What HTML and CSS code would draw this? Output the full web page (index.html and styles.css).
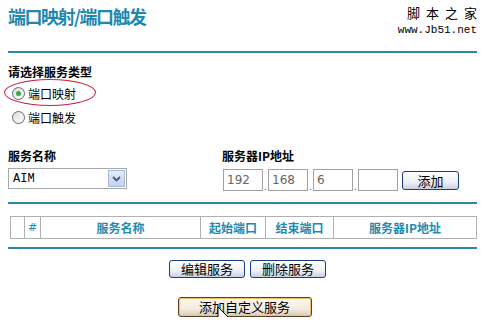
FILE: index.html
```html
<!DOCTYPE html>
<html lang="zh-CN">
<head>
    <meta charset="UTF-8">
    <title>端口映射/端口触发</title>
    <link rel="stylesheet" href="styles.css">
</head>
<body>
    <div class="page">
        <!-- Title and watermark -->
        <div class="header">
            <h1>端口映射/端口触发</h1>
            <div class="logo">
                <div class="logo-cn">脚本之家</div>
                <div class="logo-url">www.Jb51.net</div>
            </div>
        </div>
        <div class="rule"></div>

        <!-- Service type -->
        <div class="type-section">
            <div class="label">请选择服务类型</div>
            <label class="radio-row marked">
                <span class="radio checked"></span>端口映射
                <span class="ring"></span>
            </label>
            <label class="radio-row">
                <span class="radio"></span>端口触发
            </label>
        </div>

        <!-- Service and IP -->
        <div class="fields">
            <div class="field">
                <div class="label">服务名称</div>
                <div class="select">
                    <span class="select-value">AIM</span>
                    <span class="select-btn">
                        <svg width="9" height="6" viewBox="0 0 9 6"><path d="M1 1 L4.5 4.5 L8 1" fill="none" stroke="#3c5a8c" stroke-width="1.8"/></svg>
                    </span>
                </div>
            </div>
            <div class="field">
                <div class="label">服务器IP地址</div>
                <div class="ip-row">
                    <span class="ip-box">192</span><span class="dot">.</span>
                    <span class="ip-box">168</span><span class="dot">.</span>
                    <span class="ip-box">6</span><span class="dot">.</span>
                    <span class="ip-box"></span>
                    <button class="btn add">添加</button>
                </div>
            </div>
        </div>
        <div class="rule"></div>

        <!-- Service table -->
        <table class="services">
            <tr>
                <th class="c-blank"></th>
                <th class="c-num">#</th>
                <th class="c-name">服务名称</th>
                <th class="c-start">起始端口</th>
                <th class="c-end">结束端口</th>
                <th class="c-ip">服务器IP地址</th>
            </tr>
        </table>
        <div class="rule"></div>

        <!-- Actions -->
        <div class="actions">
            <button class="btn">编辑服务</button>
            <button class="btn">删除服务</button>
        </div>
        <div class="actions custom">
            <button class="btn hover">添加自定义服务</button>
            <svg class="cursor" width="14" height="23" viewBox="0 0 14 23">
                <path d="M1 1 L1 18 L5 14 L8 21.5 L11 20.3 L8 13 L13 13 Z" fill="#fff" stroke="#000" stroke-width="1"/>
            </svg>
        </div>
    </div>
</body>
</html>
```

FILE: styles.css
```css
/* Base page */
body {
    margin: 0;
    background-color: white;
    font-family: "Noto Sans CJK SC", "DejaVu Sans", sans-serif;
    font-size: 12px;
    color: #000;
}

.page {
    position: relative;
    padding: 0 9px 0 8px;
}

/* Header */
.header {
    display: flex;
    justify-content: space-between;
    align-items: flex-start;
    height: 51px;
}

h1 {
    margin: 4px 0 0 0;
    font-size: 18px;
    line-height: 24px;
    font-weight: bold;
    color: #1f88ae;
    letter-spacing: -1.5px;
}

.logo {
    margin-top: 4px;
    text-align: right;
}

.logo-cn {
    font-size: 13px;
    line-height: 17px;
    letter-spacing: 6px;
    margin-right: -6px;
}

.logo-url {
    font-family: "Liberation Mono", monospace;
    font-size: 11px;
    line-height: 14px;
    margin-top: 2px;
}

.rule {
    height: 2px;
    background-color: #2f88a4;
}

.label {
    font-weight: bold;
    font-size: 12px;
    line-height: 16px;
}

/* Service type radios */
.type-section {
    padding-top: 11px;
    height: 84px;
}

.radio-row {
    position: relative;
    display: flex;
    align-items: center;
    height: 24px;
    font-size: 12px;
    margin-left: 4px;
}

.radio-row.marked {
    margin-top: 1px;
}

.radio {
    width: 11px;
    height: 11px;
    border: 1px solid #5a6c88;
    border-radius: 50%;
    background: linear-gradient(135deg, #dcdcd4, #fff);
    margin-right: 3px;
    position: relative;
}

.radio.checked::after {
    content: "";
    position: absolute;
    left: 3px;
    top: 3px;
    width: 5px;
    height: 5px;
    border-radius: 50%;
    background-color: #3aa64a;
}

.ring {
    position: absolute;
    left: -8px;
    top: -2px;
    width: 90px;
    height: 25px;
    border: 1px solid #c8203c;
    border-radius: 50%;
}

/* Service / IP fields */
.fields {
    display: flex;
    height: 54px;
}

.field:first-child {
    width: 214px;
}

.select {
    display: flex;
    width: 117px;
    height: 19px;
    margin-top: 4px;
    border: 1px solid #a8a8a8;
    align-items: center;
}

.select-value {
    flex: 1;
    padding-left: 4px;
    font-family: "Liberation Mono", monospace;
    font-size: 12px;
}

.select-btn {
    display: flex;
    align-items: center;
    justify-content: center;
    width: 15px;
    height: 15px;
    margin-right: 1px;
    border: 1px solid #a8b8d8;
    background: linear-gradient(#e4ecfa, #c4d2ee);
}

.ip-row {
    display: flex;
    align-items: flex-end;
    margin-top: 5px;
    margin-left: 1px;
}

.ip-box {
    width: 35px;
    height: 20px;
    border: 1px solid #a0a0a0;
    padding-left: 3px;
    font-family: "DejaVu Sans", sans-serif;
    font-size: 12px;
    line-height: 20px;
    color: #666;
}

.dot {
    width: 5px;
    font-size: 10px;
    line-height: 10px;
    color: #666;
    text-align: center;
}

/* Buttons */
.btn {
    font-family: "Noto Sans CJK SC", sans-serif;
    font-size: 13px;
    line-height: 14px;
    height: 19px;
    padding: 0 6px;
    border: 1px solid #1c3c80;
    border-radius: 3px;
    background: linear-gradient(#ffffff, #eef0f4 60%, #c8d0e2);
    color: #000;
}

.btn.add {
    width: 57px;
    margin-left: 4px;
    margin-bottom: 1px;
}

.btn.hover {
    border-color: #604020;
    box-shadow: inset 0 0 0 1px #f0c070;
    background: linear-gradient(#fff8ea, #f2ece0 60%, #d6ccb8);
}

/* Table */
.services {
    width: 467px;
    margin: 12px 0 8px 2px;
    border-collapse: collapse;
}

.services th {
    height: 21px;
    border: 1px solid #b0b0b0;
    font-size: 12px;
    font-weight: bold;
    color: #1f8ab0;
    padding: 0;
}

.services .c-num {
    font-weight: normal;
    font-family: "DejaVu Sans", sans-serif;
    font-size: 11px;
}

.c-blank { width: 13px; }
.c-num { width: 15px; }
.c-name { width: 159px; }
.c-start { width: 64px; }
.c-end { width: 67px; }

/* Action rows */
.actions {
    display: flex;
    justify-content: center;
    gap: 5px;
    margin-top: 11px;
    padding-left: 10px;
}

.actions .btn {
    width: 76px;
    height: 18px;
}

.actions.custom {
    position: relative;
    margin-top: 19px;
    padding-left: 4px;
}

.actions.custom .btn {
    width: 134px;
    height: 20px;
}

.cursor {
    position: absolute;
    left: 209px;
    top: 9px;
}
```
